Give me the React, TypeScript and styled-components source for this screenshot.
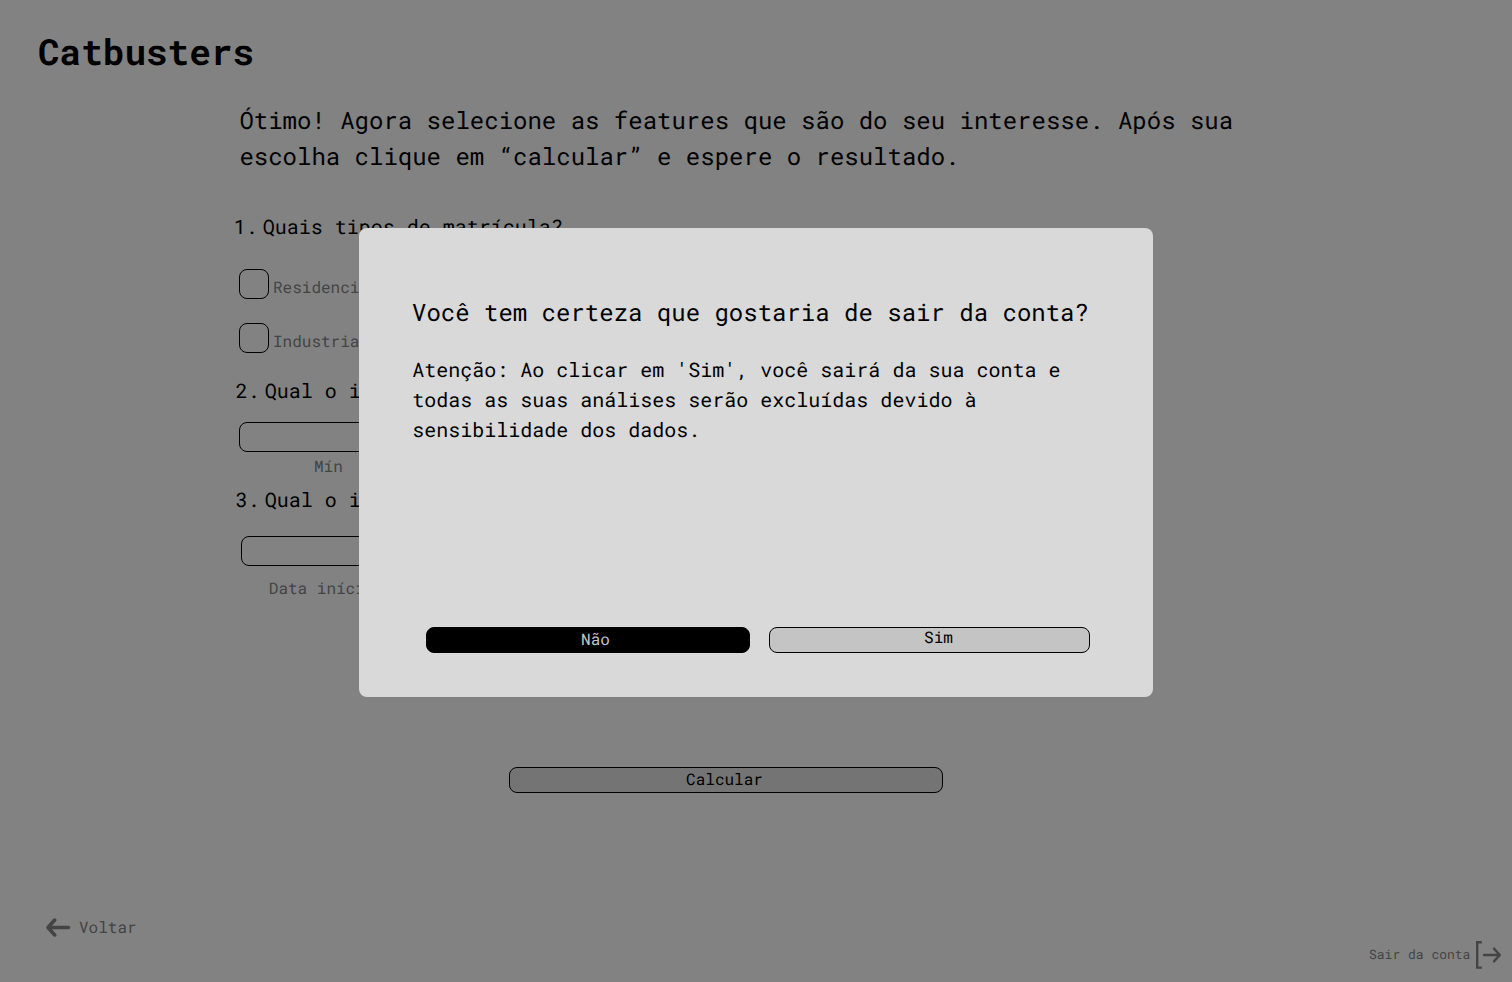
import React from "react";
import styled, { createGlobalStyle } from "styled-components";

const GlobalStyle = createGlobalStyle`
  * { box-sizing: border-box; }
  body {
    margin: 0;
    background: #828282;
    color: #000;
    font-family: "Roboto Mono", "DejaVu Sans Mono", "Liberation Mono", monospace;
    text-rendering: geometricPrecision;
  }
  h1, h2, p { margin: 0; font-weight: 400; }
  button { font-family: inherit; text-rendering: inherit; }
`;

const Page = styled.div`
  display: flex;
  flex-direction: column;
  width: 1512px;
  height: 982px;
  overflow: hidden;
`;

const Brand = styled.h1`
  && { font-weight: 700; }
  padding: 27px 0 0 38px;
  font-size: 36px;
  line-height: 48px;
`;

const Content = styled.main`
  display: flex;
  flex-direction: column;
  padding: 27px 0 0 239px;
`;

const Intro = styled.p`
  width: 1020px;
  padding-left: 0.4px;
  font-size: 24px;
  line-height: 36px;
`;

const Question = styled.h2<{ $top: number; $shift: number }>`
  display: flex;
  gap: 5px;
  margin-top: ${(p) => p.$top}px;
  margin-left: ${(p) => p.$shift}px;
  font-size: 20px;
  line-height: 30px;
`;

const Option = styled.label<{ $top: number }>`
  display: flex;
  align-items: flex-start;
  gap: 4px;
  height: 30px;
  margin-top: ${(p) => p.$top}px;
  color: #444;
  font-size: 16px;
  line-height: 38px;
`;

const CheckBox = styled.span`
  width: 30px;
  height: 30px;
  border: 1px solid #000;
  border-radius: 8px;
`;

const Field = styled.div<{ $top: number; $shift?: number }>`
  width: 178px;
  height: 30px;
  margin-top: ${(p) => p.$top}px;
  margin-left: ${(p) => p.$shift ?? 0}px;
  border: 1px solid #000;
  border-radius: 8px;
`;

const Caption = styled.p<{ $top: number; $left: number }>`
  margin-top: ${(p) => p.$top}px;
  padding-left: ${(p) => p.$left}px;
  color: #444;
  font-size: 16px;
  line-height: 24px;
`;

const Button = styled.button<{ $width: number; $fill: string; $ink?: string; $line?: number; $indent?: number }>`
  flex: none;
  display: flex;
  justify-content: center;
  width: ${(p) => p.$width}px;
  height: 26px;
  padding: 0 3px 0 ${(p) => p.$indent ?? 0}px;
  border: 1px solid #000;
  border-radius: 8px;
  background: ${(p) => p.$fill};
  color: ${(p) => p.$ink ?? "#000"};
  font-size: 16px;
  line-height: ${(p) => p.$line ?? 24}px;
`;

const Submit = styled.div`
  padding: 166px 0 0 509px;
`;

const Footer = styled.footer`
  display: flex;
  justify-content: space-between;
  align-items: flex-start;
  padding: 122px 10px 0 45px;
  color: #444;
`;

const BackLink = styled.a`
  display: flex;
  align-items: center;
  gap: 8px;
  font-size: 16px;
  line-height: 26px;
`;

const LogoutLink = styled.a`
  display: flex;
  align-items: center;
  gap: 4.6px;
  margin-top: 24px;
  font-size: 13px;
  line-height: 30px;
`;

const Overlay = styled.div`
  position: fixed;
  inset: 0;
  padding: 228px 0 0 359px;
`;

const Dialog = styled.section`
  display: flex;
  flex-direction: column;
  width: 794px;
  height: 469px;
  padding: 66px 63px 44px 53px;
  border-radius: 8px;
  background: #d9d9d9;
`;

const DialogTitle = styled.h2`
  font-size: 24px;
  line-height: 36px;
  white-space: nowrap;
`;

const DialogText = styled.p`
  width: 668px;
  margin-top: 25px;
  padding-left: 0.3px;
  font-size: 20px;
  line-height: 30px;
`;

const Actions = styled.div`
  display: flex;
  justify-content: space-between;
  margin-top: auto;
  padding-left: 14px;
`;

const BackIcon = () => (
  <svg width="26" height="20" viewBox="0 0 26 20" fill="none" stroke="currentColor" strokeWidth="3.5" strokeLinecap="round" strokeLinejoin="round">
    <path d="M23.5 9.5H3.2M9.7 2L3 9.5L9.7 17" />
  </svg>
);

const LogoutIcon = () => (
  <svg width="27" height="30" viewBox="0 0 27 30" fill="none" stroke="currentColor" strokeWidth="2.4" strokeLinecap="round" strokeLinejoin="round">
    <path d="M6.8 3.2H2.2V28.6H6.8" strokeLinecap="butt" strokeLinejoin="miter" />
    <path d="M9 16H24M19 9.6L24.8 16L19 22.4" />
  </svg>
);

export default function App() {
  return (
    <>
      <GlobalStyle />
      <Page>
        <Brand>Catbusters</Brand>
        <Content>
          <Intro>
            Ótimo! Agora selecione as features que são do seu interesse. Após sua escolha clique em “calcular” e espere o resultado.
          </Intro>
          <Question $top={38} $shift={-5.2}><span>1.</span><span>Quais tipos de matrícula?</span></Question>
          <Option $top={27}><CheckBox />Residencial</Option>
          <Option $top={24}><CheckBox />Industrial</Option>
          <Question $top={23} $shift={-3.2}><span>2.</span><span>Qual o item?</span></Question>
          <Field $top={16} />
          <Caption $top={3} $left={75}>Mín</Caption>
          <Question $top={6} $shift={-3.2}><span>3.</span><span>Qual o item?</span></Question>
          <Field $top={21} $shift={2} />
          <Caption $top={11} $left={29.8}>Data início</Caption>
        </Content>
        <Submit>
          <Button $width={434} $fill="#747474">Calcular</Button>
        </Submit>
        <Footer>
          <BackLink><BackIcon />Voltar</BackLink>
          <LogoutLink>Sair da conta<LogoutIcon /></LogoutLink>
        </Footer>
      </Page>
      <Overlay>
        <Dialog role="dialog">
          <DialogTitle>Você tem certeza que gostaria de sair da conta?</DialogTitle>
          <DialogText>
            Atenção: Ao clicar em 'Sim', você sairá da sua conta e todas as suas análises serão excluídas devido à sensibilidade dos dados.
          </DialogText>
          <Actions>
            <Button $width={324} $fill="#000" $ink="#c4c4c4" $indent={18}>Não</Button>
            <Button $width={321} $fill="#c4c4c4" $line={20} $indent={21}>Sim</Button>
          </Actions>
        </Dialog>
      </Overlay>
    </>
  );
}
